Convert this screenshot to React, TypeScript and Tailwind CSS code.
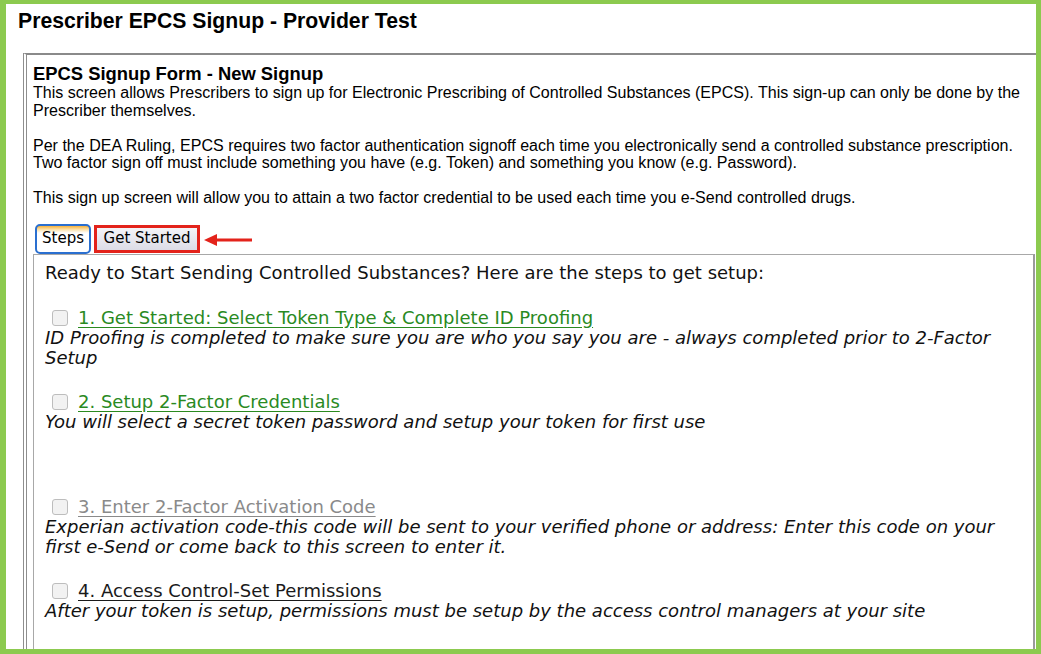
import React from "react";

const Check = () => (
  <span className="inline-block w-[16px] h-[16px] rounded-[3px] border border-[#bdbdbd] bg-[#f2f2f2] shrink-0" />
);

function Item({
  label,
  color,
  desc,
  className,
}: {
  label: string;
  color: string;
  desc: string;
  className?: string;
}) {
  return (
    <div className={className}>
      <div className="flex items-center h-[20px] pl-[7px]">
        <Check />
        <span className={`ml-[10px] underline underline-offset-[3px] ${color}`}>{label}</span>
      </div>
      <div className="italic text-[#111]">{desc}</div>
    </div>
  );
}

export default function App() {
  return (
    <div className="w-[1041px] h-[654px] overflow-hidden bg-white border-l-[6px] border-r-[5px] border-t-[4px] border-b-[5px] border-[#8cca4f] flex flex-col font-['Liberation_Sans',Arial,sans-serif] text-black">
      <div className="h-[49px] pl-[12px] pt-[4px] text-[21.2px] font-bold leading-[26px] shrink-0">
        Prescriber EPCS Signup - Provider Test
      </div>
      <div className="flex-1 ml-[17px] border-t-2 border-t-[#8a8a8a] border-l-[4px] border-l-[#8e8e8e] border-double pl-[6px] pr-px pt-[9px] overflow-hidden">
        <div className="text-[18.4px] font-bold leading-[20px]">EPCS Signup Form - New Signup</div>
        <div className="text-[16.05px] leading-[17.5px]">
          <p>
            This screen allows Prescribers to sign up for Electronic Prescribing of Controlled Substances (EPCS). This
            sign-up can only be done by the Prescriber themselves.
          </p>
          <p className="mt-[17.5px]">
            Per the DEA Ruling, EPCS requires two factor authentication signoff each time you electronically send a
            controlled substance prescription. Two factor sign off must include something you have (e.g. Token) and
            something you know (e.g. Password).
          </p>
          <p className="mt-[17.5px]">
            This sign up screen will allow you to attain a two factor credential to be used each time you e-Send
            controlled drugs.
          </p>
        </div>
        <div className="flex items-end mt-[16px] h-[31px] font-['DejaVu_Sans',Verdana,sans-serif] text-[15px]">
          <div className="ml-[2px] w-[56px] h-[30px] rounded-[5px] border-2 border-[#2a6fd0] bg-[linear-gradient(#f6b23c_0px,#fde7b8_4px,#ffffff_7px,#ffffff)] flex items-center justify-center">
            Steps
          </div>
          <div className="ml-[3px] mb-px w-[106px] h-[28px] border-[3px] border-[#e3231b] bg-[linear-gradient(#f4f4f8,#dcdce6)] flex items-center justify-center">
            Get Started
          </div>
          <svg className="ml-[4px] mb-[8px]" width="50" height="12" viewBox="0 0 50 12">
            <line x1="10" y1="6" x2="48" y2="6" stroke="#e3231b" strokeWidth="3" />
            <polygon points="0,6 13,0 13,12" fill="#e3231b" />
          </svg>
        </div>
        <div className="h-[500px] border border-[#a8a8a8] border-r-2 border-r-[#9a9a9a] pl-[11px] pt-[8px] font-['DejaVu_Sans',Verdana,sans-serif] text-[18px] leading-[20px] text-[#111]">
          <div>Ready to Start Sending Controlled Substances? Here are the steps to get setup:</div>
          <Item
            className="mt-[25px]"
            label="1. Get Started: Select Token Type & Complete ID Proofing"
            color="text-[#2a8a1f]"
            desc="ID Proofing is completed to make sure you are who you say you are - always completed prior to 2-Factor Setup"
          />
          <Item
            className="mt-[24px]"
            label="2. Setup 2-Factor Credentials"
            color="text-[#2a8a1f]"
            desc="You will select a secret token password and setup your token for first use"
          />
          <Item
            className="mt-[65px]"
            label="3. Enter 2-Factor Activation Code"
            color="text-[#8a8a8a]"
            desc="Experian activation code-this code will be sent to your verified phone or address: Enter this code on your first e-Send or come back to this screen to enter it."
          />
          <Item
            className="mt-[24px]"
            label="4. Access Control-Set Permissions"
            color="text-[#1a1a1a]"
            desc="After your token is setup, permissions must be setup by the access control managers at your site"
          />
        </div>
      </div>
    </div>
  );
}
